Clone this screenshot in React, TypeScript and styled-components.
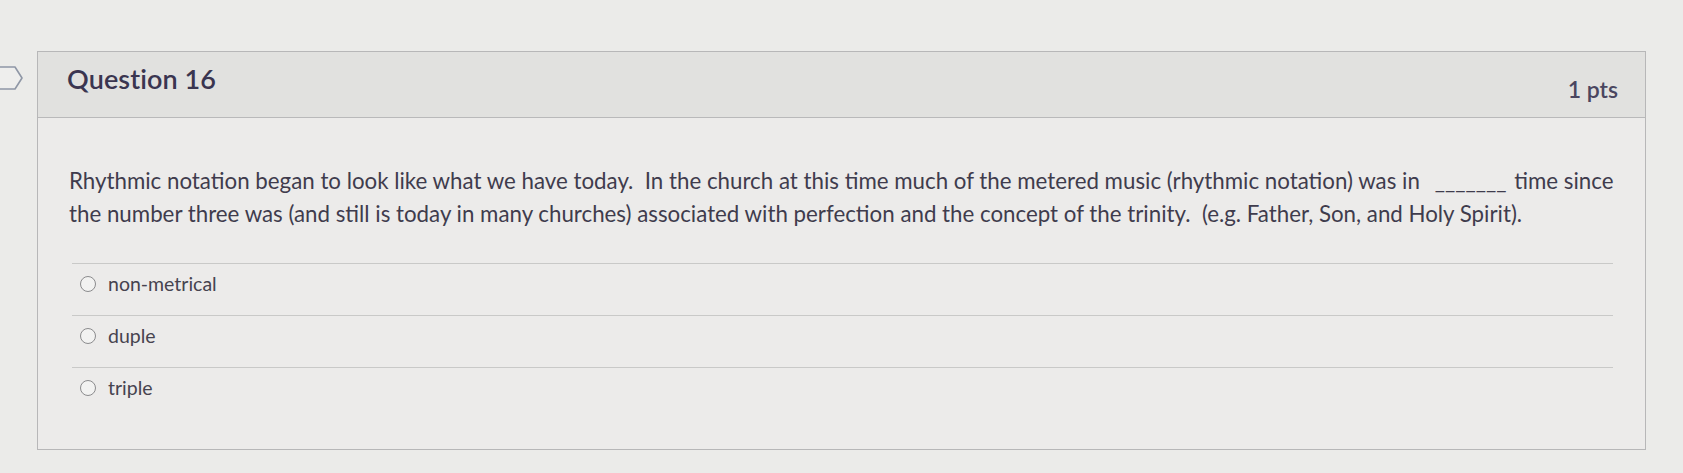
import React from "react";
import styled, { createGlobalStyle } from "styled-components";

const Global = createGlobalStyle`
  html, body {
    margin: 0;
    padding: 0;
    background: #ebebe9;
  }
  body {
    font-family: Lato, "Open Sans", "Liberation Sans", sans-serif;
    -webkit-font-smoothing: antialiased;
  }
`;

const Page = styled.div`
  width: 1683px;
  height: 473px;
  overflow: hidden;
  display: flex;
  align-items: flex-start;
  padding-top: 51px;
  box-sizing: border-box;
`;

const FlagCol = styled.div`
  width: 37px;
  flex: none;
  padding-top: 14px;
`;

const Card = styled.section`
  width: 1609px;
  flex: none;
  border: 1px solid #b7b7b8;
  background: #ecebea;
  box-sizing: border-box;
  padding-bottom: 30px;
`;

const Header = styled.header`
  height: 66px;
  box-sizing: border-box;
  background: #e1e1df;
  border-bottom: 1px solid #b9b9ba;
  display: flex;
  justify-content: space-between;
  align-items: baseline;
  padding: 10px 27px 0 29px;
`;

const Title = styled.h2`
  margin: 0;
  font-size: 27px;
  font-weight: 600;
  color: #3a3550;
  letter-spacing: 0.1px;
`;

const Points = styled.span`
  font-size: 23px;
  font-weight: 600;
  color: #4a4660;
  position: relative;
  top: 9px;
`;

const Body = styled.div`
  padding: 46px 31px 0 31px;
`;

const Prompt = styled.p`
  margin: 0 0 33px 0;
  font-size: 22.3px;
  line-height: 33px;
  color: #3f3c4d;
  white-space: nowrap;
`;

const Blank = styled.span`
  margin-left: 15px;
  margin-right: 2px;
`;

const Answers = styled.div`
  margin: 0 1px 0 3px;
`;

const Answer = styled.label`
  display: flex;
  align-items: center;
  gap: 12px;
  height: 52px;
  box-sizing: border-box;
  border-top: 1px solid #c9c9c8;
  padding: 0 0 12px 8px;
  font-size: 19.5px;
  color: #46434f;
`;

const Radio = styled.span`
  width: 16px;
  height: 16px;
  box-sizing: border-box;
  border-radius: 50%;
  border: 1.6px solid #8b8b8d;
  background: #f2f2f1;
  flex: none;
`;

const Flag = () => (
  <svg width="24" height="26" viewBox="0 0 24 26" aria-hidden="true">
    <path
      d="M-2 2 H15 L22 13 L15 24 H-2 Z"
      fill="#eeeeed"
      stroke="#8f97a6"
      strokeWidth="1.6"
      strokeLinejoin="round"
    />
  </svg>
);

const options = ["non-metrical", "duple", "triple"];

export default function App() {
  return (
    <>
      <Global />
      <Page>
        <FlagCol>
          <Flag />
        </FlagCol>
        <Card>
          <Header>
            <Title>Question 16</Title>
            <Points>1 pts</Points>
          </Header>
          <Body>
            <Prompt>
              Rhythmic notation began to look like what we have today.&nbsp; In the church at this time much of the
              metered music (rhythmic notation) was in<Blank>_______</Blank> time since
              <br />
              the number three was (and still is today in many churches) associated with perfection and the concept of
              the trinity.&nbsp; (e.g. Father, Son, and Holy Spirit).
            </Prompt>
            <Answers>
              {options.map((o) => (
                <Answer key={o}>
                  <Radio />
                  {o}
                </Answer>
              ))}
            </Answers>
          </Body>
        </Card>
      </Page>
    </>
  );
}
